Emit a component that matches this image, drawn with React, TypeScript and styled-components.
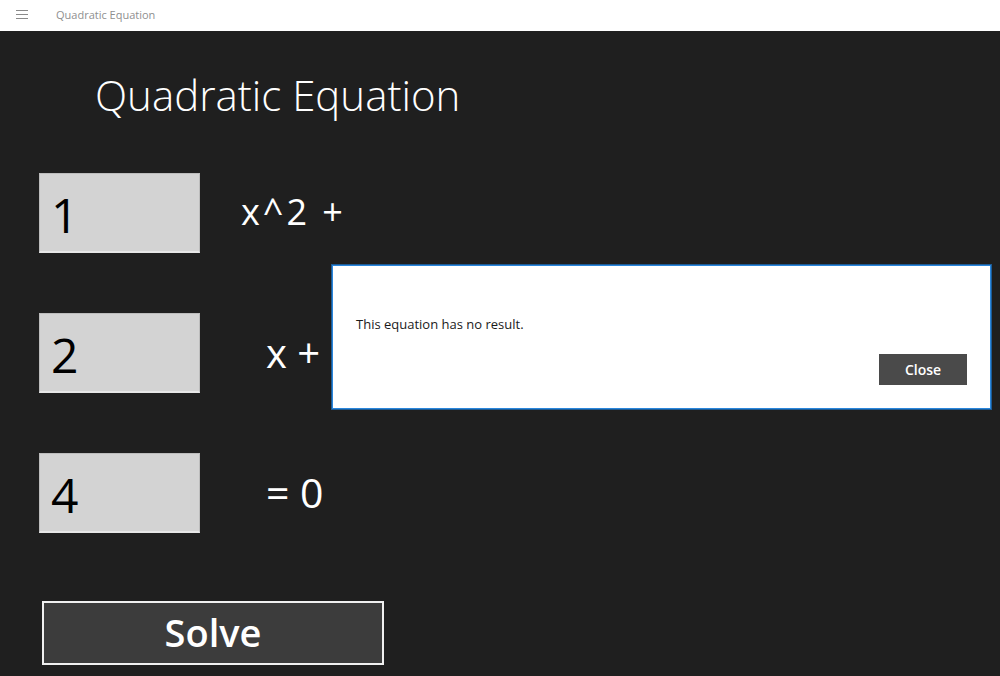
import React from "react";
import styled, { createGlobalStyle } from "styled-components";

const Global = createGlobalStyle`
  html, body { margin: 0; padding: 0; height: 100%; }
  body { background: #1f1f1f; font-family: "Open Sans", "Noto Sans", sans-serif; overflow: hidden; }
  #root { height: 100%; }
`;

const Window = styled.div`
  position: relative;
  width: 1000px;
  height: 676px;
  display: flex;
  flex-direction: column;
`;

const TitleBar = styled.header`
  height: 31px;
  flex: none;
  background: #ffffff;
  display: flex;
  align-items: center;
  padding-left: 16px;
  gap: 28px;
`;

const Hamburger = styled.div`
  width: 12px;
  display: flex;
  flex-direction: column;
  gap: 3px;
  margin-top: -2px;
  span {
    display: block;
    height: 1px;
    background: #8a8a8a;
  }
`;

const AppName = styled.span`
  font-size: 11px;
  color: #8f8f8f;
  margin-top: -2px;
`;

const Main = styled.main`
  flex: 1;
  background: #1f1f1f;
  padding: 35px 0 0 39px;
  display: flex;
  flex-direction: column;
`;

const Heading = styled.h1`
  margin: 0 0 0 56px;
  font-weight: 300;
  font-size: 42px;
  line-height: 58px;
  color: #ffffff;
`;

const Rows = styled.div`
  margin-top: 49px;
  display: flex;
  flex-direction: column;
  gap: 60px;
`;

const Row = styled.div`
  display: flex;
  align-items: center;
`;

const NumberBox = styled.div`
  box-sizing: border-box;
  width: 161px;
  height: 80px;
  background: #d3d3d3;
  border: 1px solid #bcbcbc;
  border-bottom: 2px solid #e6e6e6;
  display: flex;
  align-items: center;
  padding: 4px 0 0 11px;
  font-size: 48px;
  color: #000000;
  font-weight: 400;
`;

const Term = styled.span<{ $offset: number; $size: number; $lift: number; $track: number }>`
  margin-left: ${(p) => p.$offset}px;
  font-size: ${(p) => p.$size}px;
  letter-spacing: ${(p) => p.$track}px;
  color: #ffffff;
  margin-top: ${(p) => -p.$lift}px;
  white-space: pre;
`;

const SolveButton = styled.button`
  box-sizing: border-box;
  margin: 68px 0 0 3px;
  width: 342px;
  height: 64px;
  background: #3c3c3c;
  border: 2px solid #f0f0f0;
  color: #ffffff;
  font-family: "Open Sans", "Noto Sans", sans-serif;
  font-weight: 600;
  font-size: 38px;
  padding: 0 0 2px;
`;

const Dialog = styled.div`
  position: absolute;
  left: 332px;
  top: 265px;
  width: 659px;
  height: 144px;
  box-sizing: border-box;
  background: #ffffff;
  border: 1px solid #2a86dc;
  box-shadow: 0 0 0 1px #1c5a94;
  padding: 49px 23px 0 23px;
  display: flex;
  flex-direction: column;
`;

const Message = styled.p`
  margin: 0;
  font-size: 13px;
  color: #1a1a1a;
`;

const DialogActions = styled.div`
  margin-top: 21px;
  display: flex;
  justify-content: flex-end;
`;

const CloseButton = styled.button`
  width: 88px;
  height: 31px;
  background: #4a4a4a;
  border: none;
  color: #ffffff;
  font-family: "Open Sans", "Noto Sans", sans-serif;
  font-size: 14px;
  font-weight: 600;
`;

const terms = [
  { value: "1", label: "x^2 +", offset: 41, size: 36, lift: 4, track: 3 },
  { value: "2", label: "x +", offset: 66, size: 40, lift: 2, track: 0 },
  { value: "4", label: "= 0", offset: 66, size: 41, lift: 2, track: 0 },
];

export default function App() {
  return (
    <>
      <Global />
      <Window>
        <TitleBar>
          <Hamburger>
            <span />
            <span />
            <span />
          </Hamburger>
          <AppName>Quadratic Equation</AppName>
        </TitleBar>
        <Main>
          <Heading>Quadratic Equation</Heading>
          <Rows>
            {terms.map((t) => (
              <Row key={t.value}>
                <NumberBox>{t.value}</NumberBox>
                <Term $offset={t.offset} $size={t.size} $lift={t.lift} $track={t.track}>
                  {t.label}
                </Term>
              </Row>
            ))}
          </Rows>
          <SolveButton>Solve</SolveButton>
        </Main>
        <Dialog>
          <Message>This equation has no result.</Message>
          <DialogActions>
            <CloseButton>Close</CloseButton>
          </DialogActions>
        </Dialog>
      </Window>
    </>
  );
}
